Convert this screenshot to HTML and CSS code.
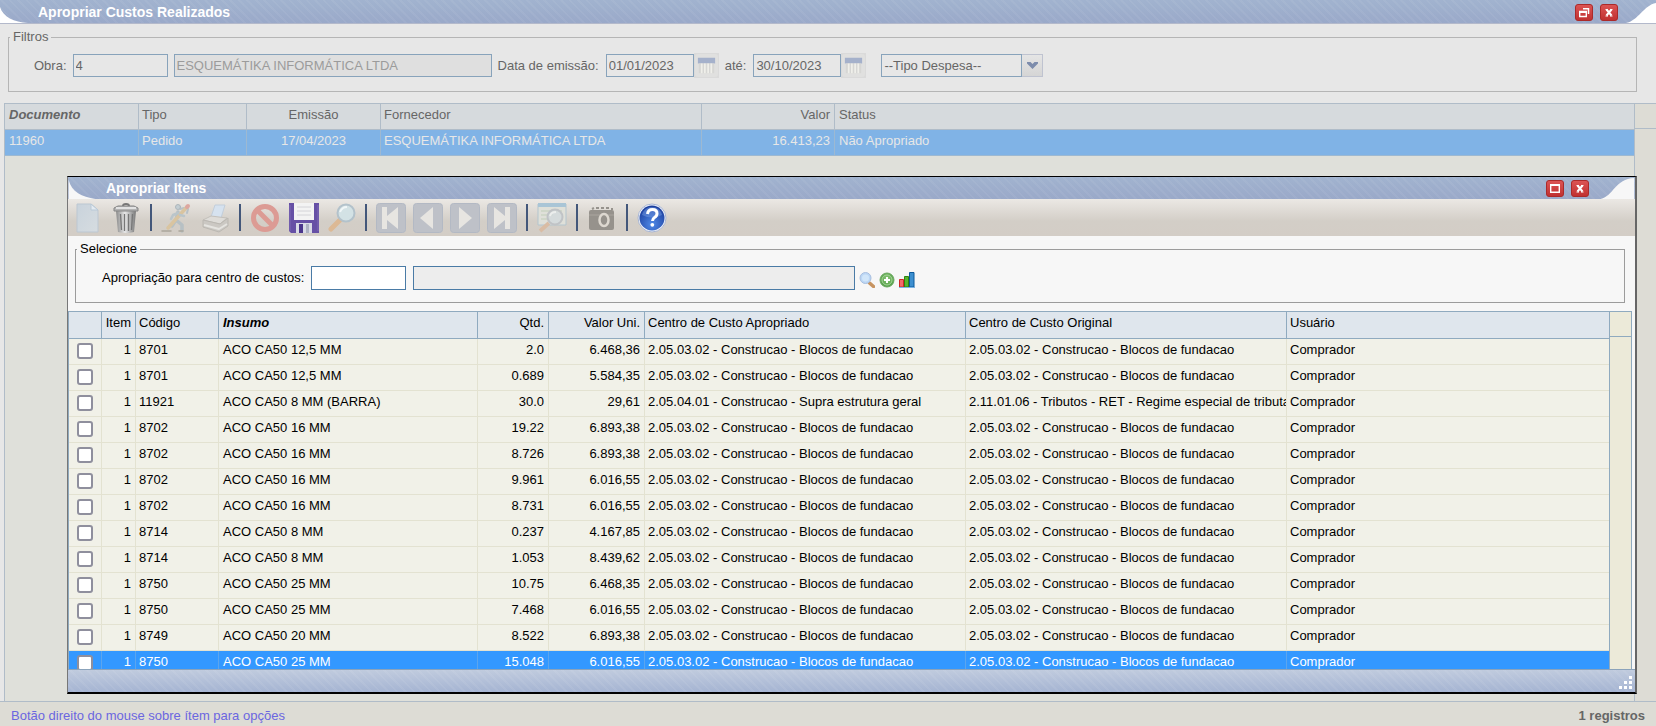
FILE: index.html
```html
<!DOCTYPE html>
<html lang="pt-BR">
<head>
<meta charset="utf-8">
<title>Apropriar Custos Realizados</title>
<link rel="stylesheet" href="styles.css">
</head>
<body>
<svg width="0" height="0" class="defs" aria-hidden="true">
  <defs>
    <linearGradient id="red" x1="0" y1="0" x2="0" y2="1"><stop offset="0" stop-color="#dc5555"/><stop offset="1" stop-color="#c03030"/></linearGradient>
    <linearGradient id="metal"><stop offset="0" stop-color="#8a8a8a"/><stop offset=".45" stop-color="#e8e8e8"/><stop offset="1" stop-color="#777"/></linearGradient>
    <linearGradient id="paper" x1="0" y1="0" x2="1" y2="1"><stop offset="0" stop-color="#c9d3dc"/><stop offset="1" stop-color="#d6dce0"/></linearGradient>
    <radialGradient id="help" cx=".5" cy=".75" r=".7"><stop offset="0" stop-color="#4f8ae8"/><stop offset="1" stop-color="#1c3f9e"/></radialGradient>
    <radialGradient id="green" cx=".5" cy=".4" r=".6"><stop offset="0" stop-color="#8bc878"/><stop offset="1" stop-color="#4f9a45"/></radialGradient>
  </defs>
</svg>

<main class="window">
  <header class="titlebar">
    <svg class="corner-left" viewBox="0 0 28 23"><path d="M0 7C3 17 14 22 28 23H0z"/></svg>
    <h1>Apropriar Custos Realizados</h1>
    <button class="win-btn" aria-label="Restaurar"><svg viewBox="0 0 18 17"><rect x=".5" y=".5" width="17" height="16" rx="2.5" fill="url(#red)" stroke="#ab2a2a"/><path d="M8 4.800h5.500V10" fill="none" stroke="#fff" stroke-width="1.500"/><path d="M4.700 7.500h6.600v5H4.700z" fill="none" stroke="#fff" stroke-width="1.400"/><path d="M4 8h8" stroke="#fff" stroke-width="2"/></svg></button>
    <button class="win-btn" aria-label="Fechar"><svg viewBox="0 0 18 17"><rect x=".5" y=".5" width="17" height="16" rx="2.500" fill="url(#red)" stroke="#ab2a2a"/><path d="M6.500 5.500l5 6m0-6l-5 6" stroke="#fff" stroke-width="2"/><path d="M5.500 5.500h2.500m2 0h2.500m-7 6.500h2.500m2 0h2.500" stroke="#fff"/></svg></button>
    <svg class="corner-right" viewBox="0 0 30 23"><path d="M0 23C12 21 18 5 30 3V23z"/></svg>
  </header>

  <form class="filters">
    <fieldset>
      <legend>Filtros</legend>
      <div class="filter-row">
        <label for="obra">Obra:</label>
        <input id="obra" class="field code" value="4">
        <input class="field name" aria-label="Nome da obra" value="ESQUEMÁTIKA INFORMÁTICA LTDA" disabled>
        <label for="de">Data de emissão:</label>
        <span class="date"><input id="de" class="field" value="01/01/2023"><button type="button" class="cal" aria-label="Calendário"><svg viewBox="0 0 24 24"><path d="M3 4h18v6H3z" fill="#a5b1cb"/><path d="M4 10h16v10H4z" fill="#d6d6d4"/><path d="M7 10v10m3.300-10v10m3.400-10v10m3.300-10v10" stroke="#efefea" stroke-width="1.800"/></svg></button></span>
        <label for="ate">até:</label>
        <span class="date"><input id="ate" class="field" value="30/10/2023"><button type="button" class="cal" aria-label="Calendário"><svg viewBox="0 0 24 24"><path d="M3 4h18v6H3z" fill="#a5b1cb"/><path d="M4 10h16v10H4z" fill="#d6d6d4"/><path d="M7 10v10m3.300-10v10m3.400-10v10m3.300-10v10" stroke="#efefea" stroke-width="1.800"/></svg></button></span>
        <span class="combo"><select class="field" aria-label="Tipo de despesa"><option>--Tipo Despesa--</option></select><span class="arrow"><svg viewBox="0 0 11 7"><path d="M0 0h3.500l2 2L7.500 0H11v1.500L5.500 7 0 1.500z" fill="#7d8cac"/></svg></span></span>
      </div>
    </fieldset>
  </form>

  <section class="docs">
    <div class="docs-body">
      <table class="grid docs-grid">
        <colgroup><col class="d1"><col class="d2"><col class="d3"><col class="d4"><col class="d5"><col></colgroup>
        <thead><tr><th class="sorted">Documento</th><th>Tipo</th><th class="mid">Emissão</th><th>Fornecedor</th><th class="num">Valor</th><th>Status</th></tr></thead>
        <tbody><tr class="selected"><td>11960</td><td>Pedido</td><td class="mid">17/04/2023</td><td>ESQUEMÁTIKA INFORMÁTICA LTDA</td><td class="num">16.413,23</td><td>Não Apropriado</td></tr></tbody>
      </table>
    </div>
    <div class="gutter"></div>
  </section>

  <footer class="status"><span class="hint">Botão direito do mouse sobre ítem para opções</span><strong>1 registros</strong></footer>
</main>

<section class="dialog" role="dialog" aria-labelledby="dlg">
  <header class="titlebar">
    <svg class="corner-left" viewBox="0 0 28 23"><path d="M0 3C3 16 14 21 28 23H0z"/></svg>
    <h2 id="dlg">Apropriar Itens</h2>
    <button class="win-btn" aria-label="Maximizar"><svg viewBox="0 0 18 17"><rect x=".5" y=".5" width="17" height="16" rx="2.500" fill="url(#red)" stroke="#ab2a2a"/><path d="M4.700 5h8.600v7.300H4.700z" fill="none" stroke="#fff" stroke-width="1.400"/><path d="M4 5h10" stroke="#fff" stroke-width="2"/></svg></button>
    <button class="win-btn" aria-label="Fechar"><svg viewBox="0 0 18 17"><rect x=".5" y=".5" width="17" height="16" rx="2.500" fill="url(#red)" stroke="#ab2a2a"/><path d="M6.500 5.500l5 6m0-6l-5 6" stroke="#fff" stroke-width="2"/><path d="M5.500 5.500h2.500m2 0h2.500m-7 6.500h2.500m2 0h2.500" stroke="#fff"/></svg></button>
    <svg class="corner-right" viewBox="0 0 35 23"><path d="M0 23C13 20 15 2 35 1V23z"/></svg>
  </header>

  <nav class="toolbar" aria-label="Ferramentas">
    <button aria-label="Novo"><svg viewBox="0 0 30 30"><path d="M5 1h14l7 6v22H5z" fill="url(#paper)" stroke="#bcc7d2"/><path d="M19 1v6h7z" fill="#e4ebf1" stroke="#b9c9d7"/></svg></button>
    <button aria-label="Excluir"><svg viewBox="0 0 30 30"><path d="M5 8h20l-2 21Q15 31 7 29z" fill="url(#metal)"/><path d="M9.500 11l1 16m3-16v17m4-17v17m4-17l-1 16" stroke="#777" stroke-width="1.300"/><path d="M12 3q0-2 3-2t3 2" fill="none" stroke="#777" stroke-width="2"/><path d="M3 8V5l4-2h16l4 2v3z" fill="#b4b4b4" stroke="#858585"/><path d="M5 5h20" stroke="#e2e2e2" stroke-width="2"/></svg></button>
    <i></i>
    <button aria-label="Executar"><svg viewBox="0 0 30 30" fill="none" stroke-linecap="round" stroke-linejoin="round"><path d="M19 6l4-1 4 1-1 4" stroke="#b7c0c6" stroke-width="2"/><circle cx="17" cy="4" r="2.500" fill="#c3ced3" stroke="#adb6bb"/><path d="M17 9l-2 8 6 5v6m-6-11l-4 6" stroke="#b7c0c4" stroke-width="3.500"/><path d="M25 5L7 25" stroke="#d9c4a0" stroke-width="3.500"/><path d="M17 10l-5 2-2 4m9-4l4 1" stroke="#bac5ca" stroke-width="2.500"/><path d="M1 28h9m8 0h4" stroke="#aca69c" stroke-width="1.500"/><path d="M26 4l1-1" stroke="#dda79f" stroke-width="4"/></svg></button>
    <button aria-label="Imprimir"><svg viewBox="0 0 30 30" stroke-linejoin="round"><path d="M11 14L15 2h10l-4 13z" fill="#d6e2ef" stroke="#c2cedb"/><path d="M3 17l8-4 16 2-7 6z" fill="#dedcd8" stroke="#c3c0bb"/><path d="M3 17v7l16 5 9-6v-8l-8 6z" fill="#cbc8c3" stroke="#bbb8b2"/><path d="M4 22l15 4 8-5" fill="none" stroke="#e5e4e0" stroke-width="2"/></svg></button>
    <i></i>
    <button aria-label="Cancelar"><svg viewBox="0 0 30 30" fill="none" stroke="#dc9b94" stroke-width="5"><circle cx="15" cy="15" r="11.500"/><path d="M7 7l16 16"/></svg></button>
    <button aria-label="Salvar"><svg viewBox="0 0 30 30"><path d="M0 0h30v30H2l-2-2z" fill="#6650a5"/><path d="M5 0h20v17H5z" fill="#f3f3f3"/><path d="M8 4h14M8 8h14M8 12h14" stroke="#d4d4d8"/><path d="M7 20h16v10H7z" fill="#d9dbe6"/><path d="M10 21h4v9h-4z" fill="#4b368c"/><path d="M17 21h3v9h-3z" fill="#aeb2c3"/><path d="M1 2v26M29 2v26" stroke="#7d69b5"/></svg></button>
    <button class="narrow" aria-label="Pesquisar"><svg viewBox="0 0 28 30"><path d="M3 26l9-9" stroke="#dcb995" stroke-width="5" stroke-linecap="round"/><circle cx="18" cy="10" r="8.500" fill="#d3e2e5" stroke="#b3c2cb" stroke-width="2"/><path d="M12 9q2-5 7-5" stroke="#f1f7f8" stroke-width="2" fill="none"/></svg></button>
    <i></i>
    <span class="pager">
      <button aria-label="Primeiro"><svg viewBox="0 0 30 30"><rect x=".5" y=".5" width="29" height="29" rx="3" fill="#bec1c8" stroke="#b3b9c4"/><path d="M6 4h5v9L22 4v22L11 17v9H6z" fill="#e7e5e1"/></svg></button>
      <button aria-label="Anterior"><svg viewBox="0 0 30 30"><rect x=".5" y=".5" width="29" height="29" rx="3" fill="#bec1c8" stroke="#b3b9c4"/><path d="M7 15L20 4v22z" fill="#e7e5e1"/></svg></button>
      <button aria-label="Próximo"><svg viewBox="0 0 30 30"><rect x=".5" y=".5" width="29" height="29" rx="3" fill="#bec1c8" stroke="#b3b9c4"/><path d="M22 15L9 4v22z" fill="#e7e5e1"/></svg></button>
      <button aria-label="Último"><svg viewBox="0 0 30 30"><rect x=".5" y=".5" width="29" height="29" rx="3" fill="#bec1c8" stroke="#b3b9c4"/><path d="M23 4h-5v9L7 4v22l11-9v9h5z" fill="#e7e5e1"/></svg></button>
    </span>
    <i></i>
    <button aria-label="Consultar"><svg viewBox="0 0 30 30"><path d="M1 1h28v21H1z" fill="#dfe0d9" stroke="#b3c5ce"/><path d="M1 0h28v4H1z" fill="#a9c5d6"/><path d="M4 8h21M4 12h12M4 16h9" stroke="#ccd3c3" stroke-width="1.500"/><path d="M3 28l9-8" stroke="#d9bca4" stroke-width="4"/><circle cx="18" cy="14" r="7.500" fill="#d2d9dc" fill-opacity=".8" stroke="#c0c3c6" stroke-width="2"/><path d="M13 13q1-4 6-4" stroke="#eceeed" stroke-width="2" fill="none"/></svg></button>
    <i></i>
    <button aria-label="Câmera"><svg viewBox="0 0 30 30"><path d="M5 6l2-1m2 0h3m2 0h3m2 0h3m2 1h2" stroke="#96928c" stroke-width="2"/><rect x="2" y="7" width="25" height="20" rx="2" fill="#96928c"/><path d="M2 12h25" stroke="#aaa59e"/><ellipse cx="17" cy="17" rx="4.500" ry="6" fill="#96928c" stroke="#ddd8d0" stroke-width="2.500"/></svg></button>
    <i></i>
    <button aria-label="Ajuda"><svg viewBox="0 0 30 30"><circle cx="15" cy="15" r="14" fill="#eef1f8" stroke="#a9b6d3"/><circle cx="15" cy="15" r="12.500" fill="url(#help)"/><path d="M5 12Q7 4 15 4t10 8q-10 5-20 0" fill="#7da3e8" opacity=".45"/><path d="M10.500 11q.5-4.500 5-4.500t4.500 4q0 2.500-2.500 4-2 1.200-2 3.500" fill="none" stroke="#fff" stroke-width="3"/><circle cx="15.300" cy="21.800" r="1.900" fill="#fff"/></svg></button>
  </nav>

  <div class="select-box">
    <fieldset>
      <legend>Selecione</legend>
      <div class="cost-row">
        <label for="centro">Apropriação para centro de custos:</label>
        <input id="centro" class="field">
        <input class="field wide" aria-label="Descrição do centro de custos" disabled>
        <span class="minis">
          <button aria-label="Pesquisar"><svg viewBox="0 0 16 16"><path d="M10.500 11l4 3.500" stroke="#c79461" stroke-width="3.500" stroke-linecap="round"/><circle cx="6.500" cy="6" r="5.500" fill="#bcd7f5" stroke="#a8bfdf"/><circle cx="6.500" cy="6" r="3.500" fill="#d1e6fa"/></svg></button>
          <button aria-label="Adicionar"><svg viewBox="0 0 16 16"><circle cx="8" cy="8" r="7" fill="url(#green)" stroke="#6aa95f"/><circle cx="8" cy="8" r="5" fill="none" stroke="#a7d69a"/><path d="M8 5v6M5 8h6" stroke="#fff" stroke-width="2"/></svg></button>
          <button aria-label="Gráfico"><svg viewBox="0 0 16 16"><path d="M.500 7.500h4V15h-4z" fill="#f26a6a" stroke="#d02828"/><path d="M5.500 4.500h4V15h-4z" fill="#58b52c" stroke="#2d8510"/><path d="M10.500.500h4.500V15h-4.500z" fill="#3d8fd0" stroke="#0c5a9c"/><path d="M0 15.500h16" stroke="#7bb3e3"/></svg></button>
        </span>
      </div>
    </fieldset>
  </div>

  <div class="items">
    <div class="items-body">
      <table class="grid items-grid">
        <colgroup><col class="c1"><col class="c2"><col class="c3"><col class="c4"><col class="c5"><col class="c6"><col class="c7"><col class="c7"><col></colgroup>
        <thead><tr><th></th><th class="num">Item</th><th>Código</th><th class="sorted">Insumo</th><th class="num">Qtd.</th><th class="num">Valor Uni.</th><th>Centro de Custo Apropriado</th><th>Centro de Custo Original</th><th>Usuário</th></tr></thead>
        <tbody id="rows"></tbody>
      </table>
    </div>
    <div class="items-gutter"></div>
  </div>
  <footer class="dialog-foot"><svg viewBox="0 0 14 14" fill="#fff"><path d="M10 0h3v3h-3zM5 5h3v3H5zM10 5h3v3h-3zM0 10h3v3H0zM5 10h3v3H5zM10 10h3v3h-3z"/></svg></footer>
</section>
<script src="rows.js"></script>
</body>
</html>
```

FILE: rows.js
```js
const blocos = "2.05.03.02 - Construcao - Blocos de fundacao";
const items = [
  ["8701", "ACO CA50 12,5 MM", "2.0", "6.468,36"],
  ["8701", "ACO CA50 12,5 MM", "0.689", "5.584,35"],
  ["11921", "ACO CA50 8 MM (BARRA)", "30.0", "29,61", "2.05.04.01 - Construcao - Supra estrutura geral", "2.11.01.06 - Tributos - RET - Regime especial de tributa"],
  ["8702", "ACO CA50 16 MM", "19.22", "6.893,38"],
  ["8702", "ACO CA50 16 MM", "8.726", "6.893,38"],
  ["8702", "ACO CA50 16 MM", "9.961", "6.016,55"],
  ["8702", "ACO CA50 16 MM", "8.731", "6.016,55"],
  ["8714", "ACO CA50 8 MM", "0.237", "4.167,85"],
  ["8714", "ACO CA50 8 MM", "1.053", "8.439,62"],
  ["8750", "ACO CA50 25 MM", "10.75", "6.468,35"],
  ["8750", "ACO CA50 25 MM", "7.468", "6.016,55"],
  ["8749", "ACO CA50 20 MM", "8.522", "6.893,38"],
  ["8750", "ACO CA50 25 MM", "15.048", "6.016,55"]
];
document.getElementById("rows").innerHTML = items.map((r, i) => `
  <tr class="${i === items.length - 1 ? "selected" : ""}">
    <td class="check"><input type="checkbox" aria-label="Selecionar ${r[1]}"></td>
    <td class="num">1</td><td>${r[0]}</td><td>${r[1]}</td>
    <td class="num">${r[2]}</td><td class="num">${r[3]}</td>
    <td>${r[4] || blocos}</td><td>${r[5] || blocos}</td><td>Comprador</td>
  </tr>`).join("");
```

FILE: styles.css
```css
* { box-sizing: border-box; }
html, body { height: 100%; }
body {
  margin: 0;
  background: #e7e7e7;
  color: #666;
  font: 13px/16px "Liberation Sans", Arial, sans-serif;
  overflow: hidden;
}
svg { display: block; }
.defs { position: absolute; }
button { padding: 0; border: 0; background: none; }
h1, h2 { margin: 0; flex: 1; font-size: 14px; line-height: 16px; color: #fff; }
fieldset { margin: 0; padding: 0; min-width: 0; }
legend { padding: 0 3px; margin-left: 1px; line-height: 16px; }

.window { display: flex; flex-direction: column; height: 100vh; }
.titlebar {
  display: flex;
  align-items: flex-end;
  gap: 7px;
  height: 24px;
  border-bottom: 1px solid #b3b9cb;
  background:
    repeating-linear-gradient(45deg, transparent 0 4px, rgba(255,255,255,.05) 4px 6px),
    linear-gradient(#a1b3cf, #9aa9c9);
}
.titlebar h1, .titlebar h2 { padding-bottom: 3px; }
.corner-left { width: 28px; height: 23px; margin-right: 3px; fill: #fff; }
.corner-right { width: 30px; height: 23px; margin-left: 1px; fill: #fff; }
.win-btn { padding-bottom: 2px; }
.win-btn svg { width: 18px; height: 17px; }

.filters { padding: 5px 19px 0 8px; }
.filters fieldset { height: 63px; border: 1px solid #b5b5b5; }
.filter-row { display: flex; align-items: center; gap: 6px; padding: 8px 0 0 25px; }
.field {
  height: 23px;
  padding: 0 2px;
  border: 1px solid #88a3bb;
  border-radius: 0;
  background: #e7e7e7;
  color: #666;
  font: inherit;
  appearance: none;
}
.field:disabled { background: #dfdfdf; color: #9b9b9b; }
.code { width: 95px; }
.name { width: 318px; }
.date, .combo { display: flex; align-items: center; }
.date { margin-left: 1px; }
.date .field { width: 88px; }
.cal { width: 25px; height: 25px; padding: 1px; background: #dadada; }
.cal svg { width: 23px; height: 23px; border-radius: 3px; background: #e0e0df; }
.combo { margin-left: 9px; }
.combo .field { width: 141px; }
.arrow {
  display: grid;
  place-items: center;
  width: 21px;
  height: 23px;
  border: 1px solid #bfc3d0;
  border-left: 0;
  background: linear-gradient(#e5e5e5, #d5d5d5);
}
.arrow svg { width: 11px; height: 7px; }

.docs { display: flex; flex: 1; min-height: 0; margin-top: 11px; padding-left: 4px; }
.docs-body { flex: 1; border: 1px solid #b0bcc8; border-bottom: 0; background: #dfe0da; }
.gutter { width: 21px; border-top: 1px solid #b0bcc8; background: linear-gradient(#b0bcc8, #b0bcc8) 0 24px / 100% 1px no-repeat #dddcd5; }
.grid { width: 100%; table-layout: fixed; border-collapse: separate; border-spacing: 0; }
.grid th, .grid td {
  height: 26px;
  padding: 0 3px 4px;
  overflow: hidden;
  white-space: nowrap;
  text-align: left;
  font-weight: normal;
  border-right: 1px solid;
  border-bottom: 1px solid;
}
.grid th:last-child, .grid td:last-child { border-right: 0; }
.grid .sorted { font-weight: bold; font-style: italic; }
.grid .num { text-align: right; }
.grid .mid { text-align: center; }
.docs-grid th { background: #d6dadd; border-color: #b0bcc8; }
.docs-grid td { background: #80b3e6; border-color: #9db9d2; color: #e7e7e7; }
.docs-grid .num { padding-right: 4px; }
.docs-grid th:first-child, .docs-grid td:first-child,
.docs-grid th:last-child, .docs-grid td:last-child { padding-left: 4px; }
.d1 { width: 134px; }
.d2 { width: 108px; }
.d3 { width: 134px; }
.d4 { width: 321px; }
.d5 { width: 133px; }

.status {
  display: flex;
  justify-content: space-between;
  align-items: center;
  height: 25px;
  padding: 4px 11px 0;
  border-top: 1px solid #b0bcc8;
  background: #dddcd5;
}
.hint { color: #6b66e0; }

.dialog {
  position: absolute;
  inset: 176px 19px 32px 67px;
  display: flex;
  flex-direction: column;
  border: solid #000;
  border-width: 1px 2px 2px 1px;
  border-left-color: #777;
  border-right-color: #666;
  background: #f7f7f7;
  color: #000;
}
.dialog .titlebar { height: 22px; border: 0; }
.dialog .corner-left, .dialog .corner-right { height: 22px; fill: #f7f7f7; }
.dialog .corner-right { width: 35px; margin-left: 4px; }
.dialog .field { border-color: #4a7ba6; background: #fff; width: 95px; height: 24px; }
.dialog .field:disabled { background: #ededed; }
.dialog .wide { width: 442px; }

.toolbar {
  display: flex;
  align-items: center;
  gap: 9px;
  height: 37px;
  padding-left: 4px;
  background: linear-gradient(#ebe8e4, #d3cec7 60%, #d3cdc6);
}
.toolbar svg { width: 30px; height: 30px; }
.toolbar .narrow svg { width: 28px; }
.toolbar i { width: 2px; height: 27px; background: #43577a; }
.pager { display: flex; gap: 7px; }

.select-box { padding: 5px 10px 0 7px; }
.select-box fieldset { height: 62px; border: 1px solid #9c9c9c; }
.cost-row { display: flex; align-items: center; gap: 7px; padding: 9px 0 0 26px; }
.minis { display: flex; gap: 4px; padding-top: 4px; margin-left: -3px; }
.minis svg { width: 16px; height: 16px; }

.items { display: flex; flex: 1; min-height: 0; margin-top: 8px; padding-right: 3px; border-bottom: 1px solid #8ba3bb; }
.items-body { flex: 1; overflow: hidden; border: 1px solid #8faabf; border-bottom: 0; }
.items-gutter { width: 22px; border: 1px solid #8faabf; border-width: 1px 1px 0 0; background: linear-gradient(#8faabf, #8faabf) 0 24px / 100% 1px no-repeat #ecead9; }
.items-grid th { height: 27px; padding-bottom: 5px; background: #dfe6ed; border-color: #8faabf; }
.items-grid td { background: #f1f1e8; border-color: #e3e2d1; }
.items-grid .selected td { background: #3398ff; border-color: #5ba5ee; color: #fff; }
.items-grid .num { padding-right: 4px; }
.items-grid th:nth-child(4), .items-grid td:nth-child(4) { padding-left: 4px; }
.items-grid .check { padding: 0 0 2px; text-align: center; }
.check input {
  display: block;
  width: 16px;
  height: 16px;
  margin: 0 auto;
  border: 2px solid #8f8f9d;
  border-radius: 3px;
  background: #fff;
  appearance: none;
}
.c1 { width: 33px; }
.c2 { width: 34px; }
.c3 { width: 83px; }
.c4 { width: 259px; }
.c5 { width: 71px; }
.c6 { width: 96px; }
.c7 { width: 321px; }

.dialog-foot {
  display: flex;
  justify-content: flex-end;
  align-items: flex-end;
  height: 22px;
  padding: 2px;
  background:
    repeating-linear-gradient(45deg, transparent 0 4px, rgba(255,255,255,.06) 4px 6px),
    linear-gradient(#c0cbde, #a5b4d2);
}
.dialog-foot svg { width: 14px; height: 14px; }
```
